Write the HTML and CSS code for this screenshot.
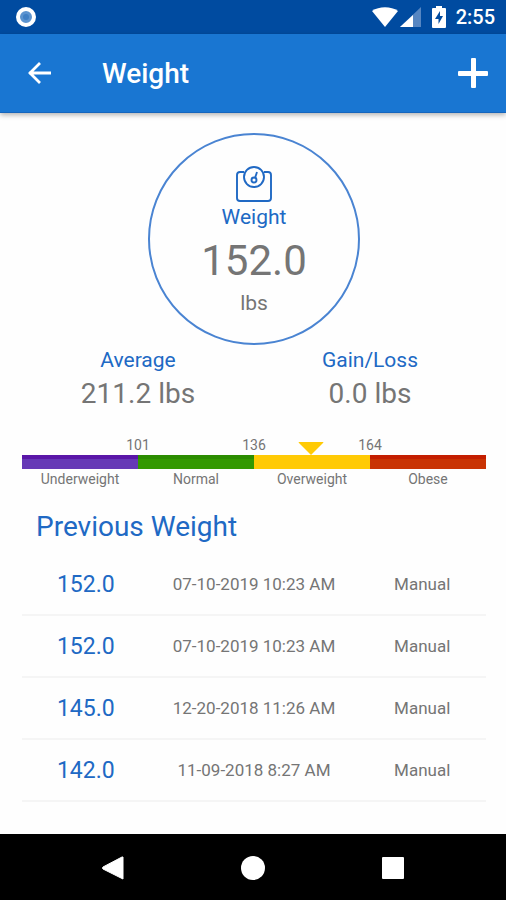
FILE: index.html
```html
<!DOCTYPE html>
<html lang="en">
<head>
  <meta charset="UTF-8" />
  <meta name="viewport" content="width=device-width, initial-scale=1" />
  <title>Weight</title>
  <link rel="stylesheet" href="styles.css">
</head>
<body>
  <div class="status-bar">
    <svg class="status-dot" width="22" height="22" viewBox="0 0 22 22" aria-hidden="true">
      <circle cx="11" cy="11" r="8" fill="#5b93cf" stroke="#fff" stroke-width="4" />
      <circle cx="11" cy="11" r="3" fill="#3f7fc4" />
    </svg>
    <div class="status-icons">
      <svg width="26" height="20" viewBox="0 0 26 20" aria-hidden="true">
        <path d="M0 4C7-1 19-1 26 4L13 20Z" fill="#fff" />
      </svg>
      <svg width="21" height="20" viewBox="0 0 21 20" aria-hidden="true">
        <path d="M21 0V20H0Z" fill="#5686c2" />
        <path d="M13 8V20H0Z" fill="#fff" />
      </svg>
      <svg class="battery" width="14" height="22" viewBox="0 0 14 22" aria-hidden="true">
        <path d="M4 0H10V2H13Q14 2 14 3V21Q14 22 13 22H1Q0 22 0 21V3Q0 2 1 2H4Z" fill="#fff" />
        <path d="M8 5L3 13H6.500V18L11 10H8Z" fill="#004ba0" />
      </svg>
      <span class="clock">2:55</span>
    </div>
  </div>

  <header class="app-bar">
    <button class="icon-btn" aria-label="Back">
      <svg width="24" height="24" viewBox="0 0 24 24" fill="none" stroke="#fff" stroke-width="2.800">
        <path d="M24 12H2M13 2L3 12L13 22" />
      </svg>
    </button>
    <h1>Weight</h1>
    <button class="icon-btn" aria-label="Add weight">
      <svg width="30" height="30" viewBox="0 0 30 30" fill="#fff">
        <rect x="13" y="0" width="5" height="30" rx="1" />
        <rect x="0" y="13" width="30" height="5" rx="1" />
      </svg>
    </button>
  </header>

  <main class="content">
    <section class="current">
      <svg width="36" height="36" viewBox="0 0 36 36" fill="none" stroke="#2069c4" stroke-width="1.900" aria-hidden="true">
        <path d="M8 6H4Q1 6 1 9V32Q1 35 4 35H32Q35 35 35 32V9Q35 6 32 6H28" />
        <circle cx="18" cy="11" r="10" />
        <circle cx="18" cy="14" r="2.500" />
        <path d="M19 12L21 6" />
      </svg>
      <h2>Weight</h2>
      <div class="current-value">152.0</div>
      <div class="current-unit">lbs</div>
    </section>

    <section class="stats">
      <div class="stat">
        <h2>Average</h2>
        <p>211.2 lbs</p>
      </div>
      <div class="stat">
        <h2>Gain/Loss</h2>
        <p>0.0 lbs</p>
      </div>
    </section>

    <section class="scale">
      <div class="limits">
        <span>101</span>
        <span>136</span>
        <span>164</span>
      </div>
      <div class="bar">
        <div class="underweight"></div>
        <div class="normal"></div>
        <div class="overweight"></div>
        <div class="obese"></div>
        <svg class="marker" style="left: 62.3%" width="26" height="13" viewBox="0 0 26 13" aria-hidden="true">
          <path d="M1 0H25Q26 0 25 1L13 13L1 1Q0 0 1 0Z" fill="#ffca05" />
        </svg>
      </div>
      <div class="labels">
        <span>Underweight</span>
        <span>Normal</span>
        <span>Overweight</span>
        <span>Obese</span>
      </div>
    </section>

    <section class="history">
      <h2 id="historyTitle">Previous Weight</h2>
      <table aria-labelledby="historyTitle">
        <tbody>
          <tr>
            <td class="value">152.0</td>
            <td class="date">07-10-2019 10:23 AM</td>
            <td>Manual</td>
          </tr>
          <tr>
            <td class="value">152.0</td>
            <td class="date">07-10-2019 10:23 AM</td>
            <td>Manual</td>
          </tr>
          <tr>
            <td class="value">145.0</td>
            <td class="date">12-20-2018 11:26 AM</td>
            <td>Manual</td>
          </tr>
          <tr>
            <td class="value">142.0</td>
            <td class="date">11-09-2018 8:27 AM</td>
            <td>Manual</td>
          </tr>
        </tbody>
      </table>
    </section>
  </main>

  <nav class="nav-bar">
    <button aria-label="Back">
      <svg width="24" height="24" viewBox="0 0 24 24"><path d="M22 1V23L2 13Q1 12 2 11L21 1Z" fill="#fff" stroke="#fff" stroke-linejoin="round" /></svg>
    </button>
    <button aria-label="Home">
      <svg width="24" height="24" viewBox="0 0 24 24"><circle cx="12" cy="12" r="12" fill="#fff" /></svg>
    </button>
    <button aria-label="Recent apps">
      <svg width="24" height="24" viewBox="0 0 24 24"><rect x="1" y="1" width="22" height="22" rx="1" fill="#fff" /></svg>
    </button>
  </nav>
</body>
</html>
```
FILE: styles.css
```css
* {
  box-sizing: border-box;
}

body {
  display: flex;
  flex-direction: column;
  min-height: 100vh;
  margin: 0;
  font-family: Roboto, sans-serif;
  background-color: #fefefe;
  color: #757575;
}

h1,
h2,
p {
  margin: 0;
  font-weight: 400;
}

h2 {
  color: #2069c4;
}

svg {
  display: block;
}

button {
  padding: 0;
  border: none;
  background: none;
  cursor: pointer;
}

.status-bar {
  display: flex;
  align-items: center;
  justify-content: space-between;
  height: 34px;
  padding: 0 11px 0 15px;
  background-color: #004ba0;
}

.status-icons {
  display: flex;
  align-items: center;
  gap: 2px;
}

.battery {
  margin: 0 8px 0 9px;
}

.clock {
  color: white;
  font-size: 20px;
  font-weight: 500;
}

.app-bar {
  display: flex;
  align-items: center;
  height: 79px;
  padding: 0 18px 0 27px;
  background-color: #1976d2;
  border-bottom: 1px solid #1565bd;
  box-shadow: 0 2px 5px rgba(0, 0, 0, 0.3);
}

.app-bar h1 {
  flex: 1;
  margin-left: 51px;
  color: white;
  font-size: 28px;
  font-weight: 500;
}

.content {
  flex: 1;
  padding: 20px 20px 32px 22px;
}

.current {
  display: flex;
  flex-direction: column;
  align-items: center;
  width: 212px;
  height: 212px;
  margin: 0 auto;
  padding-top: 31px;
  border: 2px solid #4a84d2;
  border-radius: 50%;
}

.current h2 {
  font-size: 21px;
  line-height: 30px;
}

.current-value {
  font-size: 42px;
  line-height: 58px;
}

.current-unit {
  font-size: 21px;
  line-height: 26px;
}

.stats {
  display: flex;
  text-align: center;
}

.stat {
  flex: 1;
}

.stat h2 {
  font-size: 21px;
  line-height: 30px;
}

.stat p {
  font-size: 28px;
  line-height: 38px;
}

.scale {
  margin-top: 22px;
  font-size: 14px;
  line-height: 20px;
  text-align: center;
}

.limits {
  display: flex;
  padding: 0 12.5%;
}

.limits span,
.labels span {
  flex: 1;
}

.bar {
  position: relative;
  display: flex;
  height: 14px;
}

.bar div {
  flex: 1;
}

.underweight {
  background: linear-gradient(#5a16a8 4px, #6639b6 4px);
}

.normal {
  background: linear-gradient(#2b8c00 4px, #339900 4px);
}

.overweight {
  background-color: #ffca05;
}

.obese {
  background: linear-gradient(#c41e00 4px, #c93303 4px);
}

/* points down at the current weight */
.marker {
  position: absolute;
  bottom: 100%;
  transform: translateX(-50%);
}

.labels {
  display: flex;
}

.history {
  margin-top: 18px;
}

.history h2 {
  padding-left: 14px;
  font-size: 28px;
  line-height: 40px;
}

table {
  width: 100%;
  margin-top: 7px;
  border-spacing: 0;
  table-layout: fixed;
}

td {
  height: 62px;
  padding: 0;
  border-bottom: 2px solid #f5f5f5;
  font-size: 17px;
  text-align: center;
}

.value {
  width: 27.5%;
  color: #2069c4;
  font-size: 23px;
}

.date {
  width: 45%;
}

.nav-bar {
  display: flex;
  height: 67px;
  padding: 0 43px;
  background-color: black;
}

.nav-bar button {
  display: flex;
  flex: 1;
  align-items: center;
  justify-content: center;
}
```
